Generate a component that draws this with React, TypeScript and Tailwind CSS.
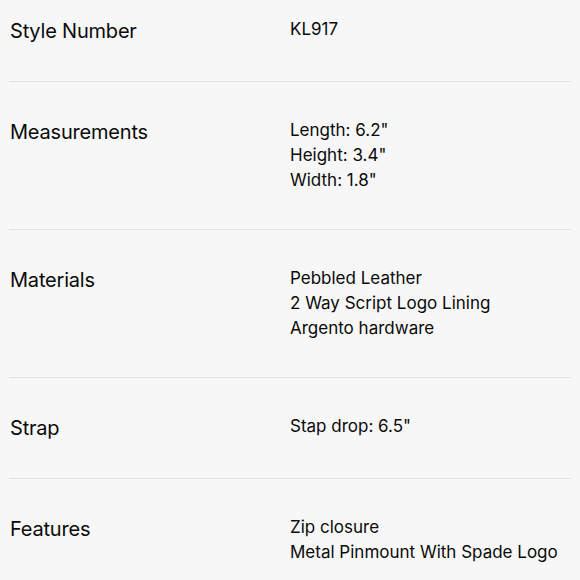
import React from 'react';

const specs = [
  { label: 'Style Number', values: ['KL917'] },
  { label: 'Measurements', values: ['Length: 6.2"', 'Height: 3.4"', 'Width: 1.8"'] },
  { label: 'Materials', values: ['Pebbled Leather', '2 Way Script Logo Lining', 'Argento hardware'] },
  { label: 'Strap', values: ['Stap drop: 6.5"'] },
  { label: 'Features', values: ['Zip closure', 'Metal Pinmount With Spade Logo'] },
];

const App = () => {
  return (
    <div className="h-[580px] w-[580px] overflow-hidden bg-[#f7f7f7] font-['Inter',sans-serif] text-[#0a0a0a]">
      <div className="-mt-[19px] px-[9px]">
        {specs.map((row, i) => (
          <div
            key={row.label}
            className={`flex items-start pt-9 pb-9 ${i < specs.length - 1 ? 'border-b border-[#e2e2e2]' : ''}`}
          >
            <div className="w-[281px] pl-px text-[20px] leading-[28px] tracking-[-0.2px]">{row.label}</div>
            <div className="flex flex-col text-[17px] leading-[25px]">
              {row.values.map((v) => (
                <span key={v}>{v}</span>
              ))}
            </div>
          </div>
        ))}
      </div>
    </div>
  );
};

export default App;
